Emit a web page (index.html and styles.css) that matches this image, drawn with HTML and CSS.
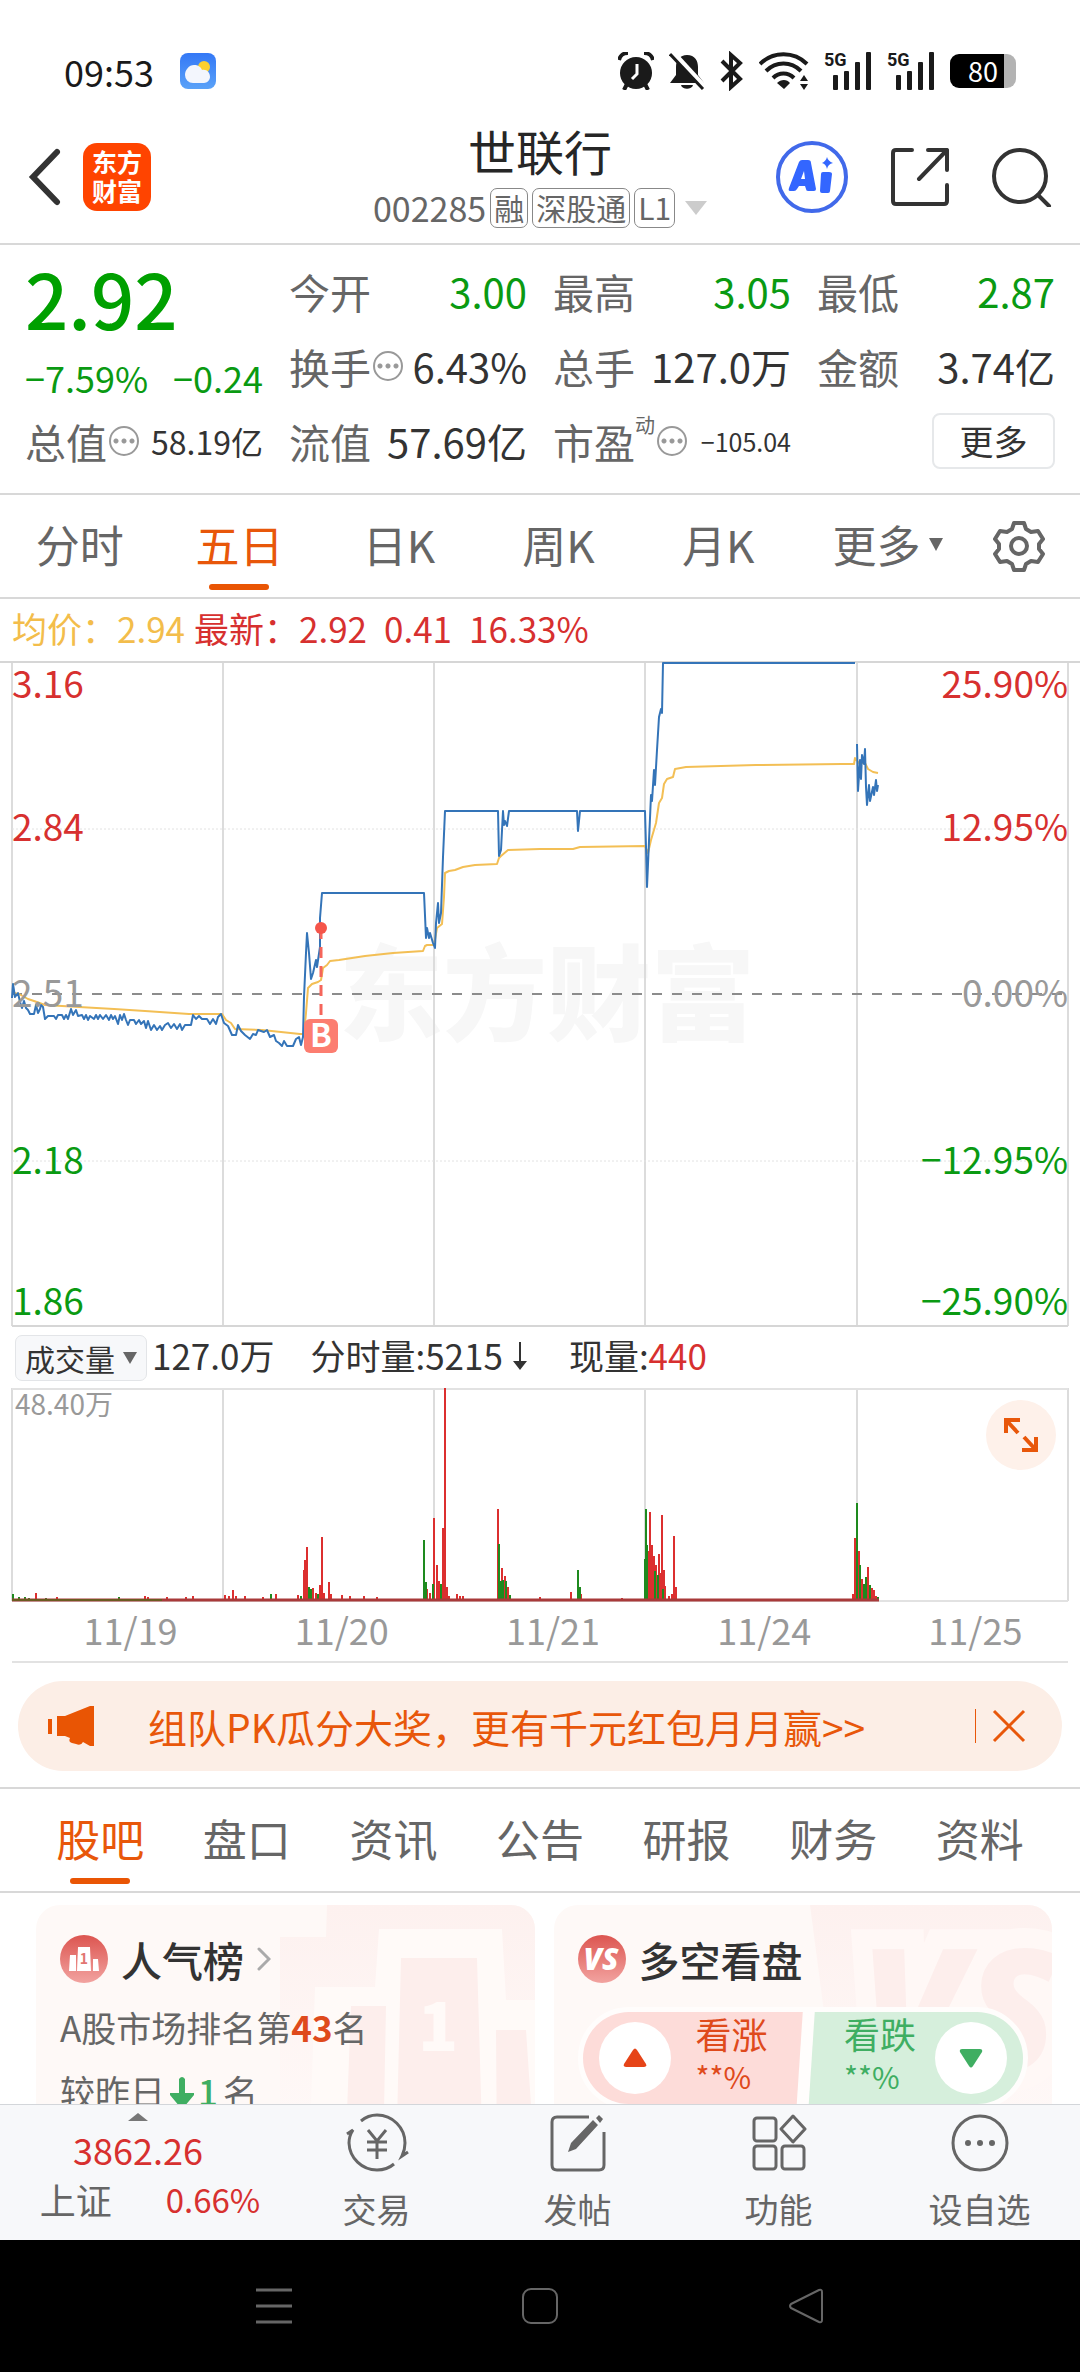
FILE: index.html
```html
<!DOCTYPE html>
<html lang="zh-CN">
<head>
  <meta charset="UTF-8">
  <meta name="viewport" content="width=device-width, initial-scale=1">
  <title>世联行 002285</title>
  <link rel="stylesheet" href="styles.css">
</head>
<body>

  <!-- phone status bar -->
  <div class="status">
    <span class="clock">09:53</span>
    <svg class="weather" width="36" height="36" viewBox="0 0 36 36">
      <defs>
        <linearGradient id="sky" x1="0" y1="0" x2="0" y2="1"><stop offset="0" stop-color="#3478f6"/><stop offset="1" stop-color="#5aa2f8"/></linearGradient>
      </defs>
      <rect width="36" height="36" rx="8" fill="url(#sky)"/>
      <circle cx="24" cy="14" r="6" fill="#fcd02f"/>
      <path d="M13 30a8 8 0 0 1-8-8c0-5 4-10 9-10 4 0 7 2 8 5 5-1 8 3 8 7 0 3-3 6-6 6z" fill="#f3f6fd"/>
    </svg>
    <div class="status-icons">
      <svg width="36" height="38" viewBox="0 0 36 38" fill="#1a1a1a">
        <circle cx="18" cy="21" r="16"/>
        <path d="M1 8a9 9 0 0 1 9-7M35 8a9 9 0 0 0-9-7M9 32l-3 6M27 32l3 6" stroke="#1a1a1a" stroke-width="4" fill="none"/>
        <path d="M19 12v10l-5 5" stroke="#fff" stroke-width="3" fill="none"/>
      </svg>
      <svg width="36" height="38" viewBox="0 0 36 38" fill="#1a1a1a">
        <path d="M18 3c8 0 11 6 11 12v8l6 8H1l6-8v-8C7 8 11 3 18 3z"/>
        <path d="M12 33h12c-1 5-11 5-12 0z"/>
        <path d="M3 0l33 36" stroke="#fff" stroke-width="6"/>
        <path d="M1 2l33 35" stroke="#1a1a1a" stroke-width="3"/>
      </svg>
      <svg width="24" height="40" viewBox="0 0 24 40" fill="none" stroke="#1a1a1a" stroke-width="4">
        <path d="M2 10l18 18-9 8V4l9 8L2 30"/>
      </svg>
      <svg width="50" height="38" viewBox="0 0 50 38" fill="none" stroke="#1a1a1a" stroke-width="4">
        <path d="M1 12c13-13 34-13 47 0M7 19c10-10 25-10 35 0M14 26c6-6 15-6 21 0"/>
        <path d="M18 31c4-4 10-4 13 0l-6 6zM41 29l4-6 4 6zM41 32l4 6 4-6z" fill="#1a1a1a" stroke="none"/>
      </svg>
      <div class="signal">
        <span>5G</span>
        <svg width="40" height="38" viewBox="0 0 40 38" fill="#1a1a1a"><rect x="1" y="23" width="5" height="15" rx="1"/><rect x="12" y="19" width="5" height="19" rx="1"/><rect x="23" y="10" width="5" height="28" rx="1"/><rect x="34" y="0" width="5" height="38" rx="1"/></svg>
      </div>
      <div class="signal">
        <span>5G</span>
        <svg width="40" height="38" viewBox="0 0 40 38" fill="#1a1a1a"><rect x="1" y="23" width="5" height="15" rx="1"/><rect x="12" y="19" width="5" height="19" rx="1"/><rect x="23" y="10" width="5" height="28" rx="1"/><rect x="34" y="0" width="5" height="38" rx="1"/></svg>
      </div>
      <div class="battery">80</div>
    </div>
  </div>

  <!-- stock header -->
  <header class="header">
    <div class="header-side">
      <button class="icon-btn" aria-label="返回">
        <svg width="34" height="58" viewBox="0 0 34 58" fill="none" stroke="#333" stroke-width="6" stroke-linecap="round"><path d="M29 4L5 29l24 25"/></svg>
      </button>
      <a class="logo" href="#">东方<br>财富</a>
    </div>
    <div class="header-title">
      <h1>世联行</h1>
      <div class="sub">
        <span class="code">002285</span>
        <span class="tag">融</span>
        <span class="tag">深股通</span>
        <span class="tag">L1</span>
        <svg class="sub-caret" width="22" height="14" viewBox="0 0 22 14"><path d="M0 0h22L11 14z" fill="#ccc"/></svg>
      </div>
    </div>
    <div class="header-side right">
      <button class="icon-btn" aria-label="AI">
        <svg width="72" height="72" viewBox="0 0 72 72">
          <circle cx="36" cy="36" r="34" fill="none" stroke="#4169ea" stroke-width="4"/>
          <path d="M23 21q1-2 3-2h6q3 0 3 3l5 26q0 2-2 2h-6q-2 0-2-2l-1-3h-6l-2 3q-1 2-3 2h-4q-2 0-1-3zM28 30l-3 8h4zM47 31h6q3 0 3 2l-2 17q0 2-2 2h-6q-2 0-2-2l1-17q0-2 2-2z" fill="#3366ff"/>
          <path d="M51 16q1 4 6 6-5 1-6 6-1-5-5-6 4-2 5-6z" fill="#3366ff"/>
        </svg>
      </button>
      <button class="icon-btn" aria-label="分享">
        <svg width="58" height="58" viewBox="0 0 58 58" fill="none" stroke="#333" stroke-width="4" stroke-linecap="round" stroke-linejoin="round">
          <path d="M21 2H5Q2 2 2 5v48q0 3 3 3h48q3 0 3-3V37M37 2h19v20M56 2L28 31"/>
        </svg>
      </button>
      <button class="icon-btn" aria-label="搜索">
        <svg width="60" height="60" viewBox="0 0 60 60" fill="none" stroke="#333" stroke-width="4" stroke-linecap="round"><circle cx="28" cy="29" r="26"/><path d="M46 48l11 11"/></svg>
      </button>
    </div>
  </header>

  <main>
    <!-- quote -->
    <section class="quote">
      <div class="price down">
        <strong>2.92</strong>
        <div class="change"><span>−7.59%</span><span>−0.24</span></div>
      </div>
      <div class="cell"><span>今开</span><b class="down">3.00</b></div>
      <div class="cell"><span>最高</span><b class="down">3.05</b></div>
      <div class="cell"><span>最低</span><b class="down">2.87</b></div>
      <div class="cell"><span>换手</span><i class="tip"></i><b>6.43%</b></div>
      <div class="cell"><span>总手</span><b>127.0万</b></div>
      <div class="cell"><span>金额</span><b>3.74亿</b></div>
      <div class="cell"><span>总值</span><i class="tip"></i><b class="mid">58.19亿</b></div>
      <div class="cell"><span>流值</span><b>57.69亿</b></div>
      <div class="cell"><span>市盈</span><small>动</small><i class="tip"></i><b class="small">−105.04</b></div>
      <div class="cell"><button class="more-btn">更多</button></div>
    </section>

    <!-- period tabs -->
    <nav class="tabs periods">
      <button>分时</button>
      <button class="active">五日</button>
      <button>日K</button>
      <button>周K</button>
      <button>月K</button>
      <button class="wide">更多<svg width="14" height="13" viewBox="0 0 14 13"><path d="M0 0h14L7 13z" fill="#666"/></svg></button>
      <button class="gear" aria-label="设置">
        <svg width="52" height="52" viewBox="0 0 52 52" fill="none" stroke="#666" stroke-width="4" stroke-linejoin="round">
          <path d="M21 3h10l2 6 5 3 7-1 5 8-4 5v5l4 5-5 8-7-1-5 3-2 6H21l-2-6-5-3-7 1-5-8 4-5v-5l-4-5 5-8 7 1 5-3z"/>
          <circle cx="26" cy="26" r="8"/>
        </svg>
      </button>
    </nav>

    <!-- price chart -->
    <div class="legend">
      <span class="avg">均价：2.94</span>
      <span class="up">最新：2.92</span>
      <span class="up">0.41</span>
      <span class="up">16.33%</span>
    </div>
    <svg class="chart" viewBox="0 0 1080 667">
      <g transform="translate(12 0)">
        <text class="watermark" x="327" y="372">东方财富</text>
        <path class="grid" d="M0 0V665M211 0V665M422 0V665M633 0V665M845 0V665M1056 0V665"/>
        <path class="grid dotted" d="M0 168H1056M0 500H1056"/>
        <path class="edge" d="M-12 1H1068M0 665H1056"/>
        <path class="zero" d="M0 333H1056"/>
        <path class="line avg-line" d="M2 332L7 333 16 338 22 340 33 344 67 346 102 348 133 350 177 353 210 353 214 359 219 362 223 368 250 369 288 373 292 373 294 352 296 327 300 323 306 321 309 319 311 307 315 304 318 300 327 299 353 295 381 292 411 290 413 285 415 284 422 284 425 267 430 263 432 236 433 212 437 210 443 209 451 206 463 204 485 203 487 197 489 195 496 189 528 188 561 188 568 186 633 185 636 192 639 179 644 162 647 142 650 137 652 123 655 118 661 116 663 108 674 106 744 104 830 103 842 103 843 97 847 102 853 102 856 108 861 111 866 112"/>
        <path class="line now-line" d="M0 337L1 323 3 336 6 332 8 341 10 347 12 340 14 347 16 349 18 353 22 353 24 344 26 352 28 348 29 344 31 346 33 358 36 355 42 355 44 358 46 354 50 354 52 358 54 354 56 358 59 348 61 354 64 349 66 355 70 354 72 358 74 354 76 359 78 355 82 358 84 354 86 358 88 354 91 358 94 354 97 359 99 354 101 358 103 355 106 363 108 354 110 359 112 353 114 359 116 364 118 359 122 359 124 363 127 359 129 363 132 360 134 367 136 360 139 369 142 364 145 369 148 365 150 369 153 364 156 362 159 367 162 363 165 368 168 363 170 369 173 364 176 364 179 364 181 354 184 358 187 355 190 358 195 358 198 363 201 358 204 363 206 356 209 353 212 362 216 365 220 374 224 374 226 364 229 370 233 374 238 378 241 373 244 374 246 369 252 371 255 369 258 376 262 374 264 380 267 382 270 385 272 380 275 385 281 385 284 378 287 376 289 384 291 376 292 336 294 292 295 272 297 292 299 318 301 312 304 299 305 306 308 286 308 257 310 232 412 232 414 277 415 267 417 277 418 272 421 282 423 287 424 262 426 242 427 262 429 252 431 196 433 150 486 150 487 195 489 189 491 150 492 164 493 160 495 165 497 150 565 150 566 170 568 150 633 150 634 186 635 226 637 180 639 134 640 140 642 109 643 124 645 89 647 56 649 48 650 52 651 2 843 2M845 83L846 130 848 99 849 118 850 94 852 103 853 88 854 126 855 144 857 124 858 140 861 126 862 134 864 119 865 130 866 124"/>
        <path d="M309 267V358" stroke="#f5655a" stroke-width="3" stroke-dasharray="11 8"/>
        <circle cx="309" cy="267" r="6" fill="#f5554a"/>
        <rect x="292" y="358" width="34" height="34" rx="6" fill="#fc7d70"/>
        <text class="mark" x="309" y="386">B</text>
        <g class="axis">
          <text class="up" x="0" y="37">3.16</text>
          <text class="up" x="0" y="180">2.84</text>
          <text class="flat" x="0" y="346">2.51</text>
          <text class="down" x="0" y="513">2.18</text>
          <text class="down" x="0" y="654">1.86</text>
        </g>
        <g class="axis end">
          <text class="up" x="1056" y="37">25.90%</text>
          <text class="up" x="1056" y="180">12.95%</text>
          <text class="flat" x="1056" y="346">0.00%</text>
          <text class="down" x="1056" y="513">−12.95%</text>
          <text class="down" x="1056" y="654">−25.90%</text>
        </g>
      </g>
    </svg>

    <!-- volume -->
    <div class="vol-head">
      <button class="chip">成交量<svg width="14" height="12" viewBox="0 0 14 12"><path d="M0 0h14L7 12z" fill="#666"/></svg></button>
      <span class="total">127.0万</span>
      <span class="minute">分时量:5215<svg width="14" height="28" viewBox="0 0 14 28" fill="#333"><path d="M6 0h2v19h6L7 28 0 19h6z"/></svg></span>
      <span>现量:<em class="up">440</em></span>
    </div>
    <div class="volume">
      <svg class="chart" viewBox="0 0 1080 215">
        <g transform="translate(12 0)">
          <path class="grid" d="M0 0V213M211 0V213M422 0V213M633 0V213M845 0V213M1056 0V213"/>
          <path class="edge light" d="M0 1H1056M0 213H1056"/>
          <path class="bar red" d="M24 213v-8M45 213v-4M133 213v-5M136 213v-4M155 213v-4M174 213v-4M181 213v-5M213 213v-6M217 213v-5M221 213v-11M224 213v-5M233 213v-5M251 213v-4M264 213v-7M286 213v-6M292 213v-31M293 213v-41M295 213v-54M301 213v-13M304 213v-8M308 213v-16M310 213v-64M312 213v-8M317 213v-19M319 213v-7M330 213v-6M338 213v-5M352 213v-5M365 213v-4M415 213v-12M418 213v-8M422 213v-83M425 213v-36M427 213v-20M431 213v-73M433 213v-213M435 213v-14M437 213v-5M445 213v-7M448 213v-5M451 213v-5M486 213v-92M490 213v-33M493 213v-25M496 213v-14M528 213v-4M559 213v-9M569 213v-7M610 213v-3M637 213v-50M638 213v-89M640 213v-56M642 213v-45M644 213v-36M647 213v-47M648 213v-28M650 213v-86M652 213v-31M653 213v-15M657 213v-5M660 213v-7M662 213v-65M664 213v-14M841 213v-7M843 213v-63M847 213v-50M850 213v-22M856 213v-34M860 213v-13M862 213v-11M864 213v-5"/>
          <path class="bar green" d="M1 213v-7M7 213v-4M13 213v-4M17 213v-3M34 213v-3M107 213v-4M259 213v-7M289 213v-5M297 213v-14M299 213v-12M306 213v-7M412 213v-61M414 213v-19M421 213v-17M429 213v-17M487 213v-57M489 213v-20M491 213v-21M494 213v-20M498 213v-6M566 213v-31M568 213v-14M633 213v-42M634 213v-92M635 213v-56M643 213v-30M646 213v-26M651 213v-12M845 213v-98M848 213v-36M852 213v-17M854 213v-24M858 213v-16M866 213v-4"/>
          <path d="M0 212H867" stroke="#a83a3a" stroke-width="3"/>
          <path d="M0 212H150" stroke="#6b5a20" stroke-width="2"/>
          <text class="cap" x="3" y="27">48.40万</text>
        </g>
      </svg>
      <button class="expand" aria-label="全屏">
        <svg width="34" height="34" viewBox="0 0 34 34" fill="none" stroke="#e8570a" stroke-width="4"><path d="M2 15V2h14M2 2l12 13M32 19v13H18M32 32L20 19"/></svg>
      </button>
    </div>
    <div class="dates">
      <span>11/19</span><span>11/20</span><span>11/21</span><span>11/24</span><span>11/25</span>
    </div>

    <!-- promo -->
    <div class="promo">
      <svg width="46" height="40" viewBox="0 0 46 40" fill="#e95504"><path d="M0 13h4v15H0zM9 10h8L42 0h4v40h-4l-7-4q-2 4-7 2l-4-1q-4-1-2-5l-5-2H9z"/></svg>
      <a href="#">组队PK瓜分大奖，更有千元红包月月赢&gt;&gt;</a>
      <button class="icon-btn close" aria-label="关闭">
        <svg width="34" height="34" viewBox="0 0 34 34" stroke="#e8570a" stroke-width="3"><path d="M2 2l30 30M32 2L2 32"/></svg>
      </button>
    </div>

    <!-- info tabs -->
    <nav class="tabs infos">
      <button class="active">股吧</button>
      <button>盘口</button>
      <button>资讯</button>
      <button>公告</button>
      <button>研报</button>
      <button>财务</button>
      <button>资料</button>
    </nav>

    <div class="cards">
      <section class="card">
        <svg class="art" width="498" height="260" viewBox="0 0 498 260">
          <defs>
            <linearGradient id="pink" x1="0" y1="0" x2="0" y2="1"><stop offset="0" stop-color="#fdf1ef"/><stop offset="1" stop-color="#fffaf9"/></linearGradient>
            <linearGradient id="badge" x1="0" y1="0" x2="0" y2="1"><stop offset="0" stop-color="#dc5550"/><stop offset="1" stop-color="#f2a3a0"/></linearGradient>
          </defs>
          <path d="M290 0H498V260H243V32H289z" fill="url(#pink)"/>
          <path d="M342 24H465L469 95H498V260H272L278 82H338z" fill="#fffaf8"/>
          <path d="M364 53H440L446 260H359zM314 101H349L346 260H308zM459 125H489L498 260H460z" fill="#fdeeec"/>
          <text class="art-one" x="401" y="146">1</text>
        </svg>
        <h2>
          <svg width="48" height="48" viewBox="0 0 48 48">
            <circle cx="24" cy="24" r="24" fill="url(#badge)"/>
            <path d="M10 20h6v16H9zM18 12h12l1 24H17zM33 24h5l1 12h-6z" fill="#fff"/>
            <text class="badge-one" x="24" y="29">1</text>
          </svg>
          人气榜
          <svg width="14" height="24" viewBox="0 0 14 24" fill="none" stroke="#aaa" stroke-width="3" stroke-linecap="round"><path d="M2 2l10 10L2 22"/></svg>
        </h2>
        <p>A股市场排名第<strong class="hot">43</strong>名</p>
        <p class="rank">较昨日<svg width="24" height="32" viewBox="0 0 24 32" fill="#3fae62"><path d="M9 2q3-4 6 0v14h9v2L14 30q-2 2-4 0L0 18v-2h9z"/></svg><strong class="cool">1</strong>名</p>
      </section>

      <section class="card">
        <svg class="art" width="498" height="260" viewBox="0 0 498 260">
          <path d="M256 0H498V260H290z" fill="url(#pink)"/>
          <text class="art-vs" x="306" y="166">VS</text>
        </svg>
        <h2>
          <svg width="48" height="48" viewBox="0 0 48 48">
            <circle cx="24" cy="24" r="24" fill="url(#badge)"/>
            <text class="badge-vs" x="23" y="35">VS</text>
          </svg>
          多空看盘
        </h2>
        <div class="vote">
          <button class="bull">
            <i><svg width="24" height="20" viewBox="0 0 24 20"><path d="M10 2q2-3 4 0l9 14q1 3-2 3H3q-3 0-2-3z" fill="#e64418"/></svg></i>
            <span>看涨<small>**%</small></span>
          </button>
          <button class="bear">
            <span>看跌<small>**%</small></span>
            <i><svg width="24" height="20" viewBox="0 0 24 20"><path d="M10 18q2 3 4 0l9-14q1-3-2-3H3q-3 0-2 3z" fill="#3fae62"/></svg></i>
          </button>
        </div>
      </section>
    </div>
  </main>

  <!-- bottom toolbar -->
  <footer class="toolbar">
    <a class="index" href="#">
      <svg width="20" height="8" viewBox="0 0 20 8"><path d="M10 0l10 8H0z" fill="#777"/></svg>
      <span class="up">3862.26</span>
      <span class="row">上证<em class="up">0.66%</em></span>
    </a>
    <a href="#">
      <svg width="66" height="60" viewBox="0 0 66 60" fill="none" stroke="#666" stroke-width="3">
        <path d="M17 8Q24 2 33 2a28 28 0 0 1 28 28q0 7-3 13l6-4M50 51q-7 6-17 6A28 28 0 0 1 5 30q0-7 4-13l-6 4"/>
        <path d="M24 17l9 11 9-11M23 29h20M23 37h20M33 28v18"/>
      </svg>
      交易
    </a>
    <a href="#">
      <svg width="58" height="60" viewBox="0 0 58 60" fill="none" stroke="#666" stroke-width="3">
        <path d="M40 4H8Q3 4 3 9v43q0 5 5 5h42q5 0 5-5V19"/>
        <path d="M19 39l3-9L44 7l5 5-22 24zM47 5l3-3 4 4-3 4z" fill="#666" stroke="none"/>
      </svg>
      发帖
    </a>
    <a href="#">
      <svg width="56" height="60" viewBox="0 0 56 60" fill="none" stroke="#666" stroke-width="3">
        <rect x="3" y="5" width="22" height="23" rx="3"/><rect x="3" y="33" width="22" height="23" rx="3"/><rect x="31" y="33" width="22" height="23" rx="3"/>
        <path d="M42 3l12 13-12 13-12-13z" stroke-linejoin="round"/>
      </svg>
      功能
    </a>
    <a href="#">
      <svg width="58" height="60" viewBox="0 0 58 60" fill="#666">
        <circle cx="29" cy="30" r="27" fill="none" stroke="#666" stroke-width="3"/>
        <circle cx="17" cy="30" r="3"/><circle cx="29" cy="30" r="3"/><circle cx="41" cy="30" r="3"/>
      </svg>
      设自选
    </a>
  </footer>

  <!-- system navigation -->
  <div class="sysnav">
    <button aria-label="菜单"><svg width="36" height="36" viewBox="0 0 36 36" stroke="#666" stroke-width="3"><path d="M0 2h36M0 18h36M0 34h36"/></svg></button>
    <button aria-label="主页"><svg width="36" height="36" viewBox="0 0 36 36" fill="none" stroke="#666" stroke-width="2"><rect x="1" y="1" width="34" height="34" rx="8"/></svg></button>
    <button aria-label="后退"><svg width="36" height="36" viewBox="0 0 36 36" fill="none" stroke="#666" stroke-width="2" stroke-linejoin="round"><path d="M34 4v28q0 3-3 2L3 20q-2-2 0-4L31 2q3-1 3 2z"/></svg></button>
  </div>

</body>
</html>
```
FILE: styles.css
```css
* {
  box-sizing: border-box;
}

body {
  margin: 0;
  height: 100vh;
  display: flex;
  flex-direction: column;
  background: #fff;
  color: #333;
  font-family: "Noto Sans CJK SC", sans-serif;
  font-size: 36px;
}

button {
  margin: 0;
  padding: 0;
  border: none;
  background: none;
  color: inherit;
  font: inherit;
  cursor: pointer;
}

a {
  color: inherit;
  text-decoration: none;
}

svg {
  flex: none;
}

em, i {
  font-style: normal;
}

h1, h2, p {
  margin: 0;
}

.up { color: #d7302f; fill: #d7302f; }
.down { color: #0a9a12; fill: #0a9a12; }
.flat { fill: #999; }

/* status bar */
.status {
  display: flex;
  align-items: center;
  flex: none;
  height: 108px;
  padding: 34px 64px 0;
  color: #1a1a1a;
}

.clock {
  line-height: 70px;
}

.weather {
  margin-left: 26px;
}

.status-icons {
  display: flex;
  align-items: center;
  gap: 15px;
  margin-left: auto;
}

.signal {
  position: relative;
  display: flex;
  justify-content: flex-end;
  width: 48px;
}

.signal span {
  position: absolute;
  left: 0;
  top: 0;
  font-family: Roboto, sans-serif;
  font-size: 18px;
  font-weight: bold;
  line-height: 16px;
}

.battery {
  width: 66px;
  height: 34px;
  border-radius: 9px;
  background: linear-gradient(90deg, #000 54px, #b3b3b3 54px);
  color: #fff;
  font-size: 27px;
  line-height: 34px;
  text-align: center;
}

/* header */
.header {
  display: flex;
  align-items: center;
  flex: none;
  height: 137px;
  padding: 2px 28px 0;
  border-bottom: 2px solid #d8d8d8;
}

.header-side {
  display: flex;
  align-items: center;
  flex: 1;
  gap: 21px;
}

.header-side.right {
  justify-content: flex-end;
  gap: 43px;
}

.icon-btn {
  display: flex;
}

.logo {
  width: 68px;
  height: 68px;
  padding-top: 4px;
  border-radius: 14px;
  background: #ff4400;
  color: #fff;
  font-size: 25px;
  font-weight: bold;
  line-height: 29px;
  text-align: center;
}

.header-title {
  display: flex;
  flex-direction: column;
  align-items: center;
}

h1 {
  font-size: 48px;
  font-weight: normal;
  line-height: 62px;
  color: #262626;
}

.sub {
  display: flex;
  align-items: center;
  gap: 4px;
  height: 54px;
  color: #666;
}

.code {
  font-size: 34px;
  line-height: 50px;
}

.tag {
  height: 40px;
  padding: 0 3px;
  border: 1px solid #888;
  border-radius: 7px;
  font-size: 30px;
  line-height: 36px;
}

.sub-caret {
  margin-left: 6px;
}

main {
  flex: 1;
  min-height: 0;
  overflow: hidden;
}

/* quote */
.quote {
  display: grid;
  grid-template-columns: repeat(4, 1fr);
  grid-template-rows: repeat(3, 75px);
  column-gap: 26px;
  height: 250px;
  padding: 8px 25px 0;
  border-bottom: 2px solid #d8d8d8;
}

.price {
  grid-row: span 2;
}

.price strong {
  display: block;
  font-size: 76px;
  font-weight: 500;
  line-height: 88px;
  color: #00a000;
}

.change {
  display: flex;
  justify-content: space-between;
  margin-top: 6px;
  line-height: 60px;
}

.cell {
  display: flex;
  align-items: center;
  font-size: 41px;
  line-height: 60px;
  color: #666;
  white-space: nowrap;
}

.cell b {
  margin-left: auto;
  font-size: 40px;
  font-weight: normal;
}

.cell b:not(.down) {
  color: #333;
}

.cell .mid {
  font-size: 32px;
}

.cell .small {
  font-size: 25px;
}

.cell small {
  align-self: flex-start;
  font-size: 20px;
  line-height: 44px;
}

.tip {
  width: 30px;
  height: 30px;
  margin-left: 2px;
  border: 2px solid #999;
  border-radius: 50%;
  background: radial-gradient(circle, #999 2px, transparent 3px) center / 8px 8px no-repeat,
    radial-gradient(circle, #999 2px, transparent 3px) 1px center / 8px 8px no-repeat,
    radial-gradient(circle, #999 2px, transparent 3px) 17px center / 8px 8px no-repeat;
}

.more-btn {
  width: 123px;
  height: 56px;
  margin-left: auto;
  border: 2px solid #e6e8ea;
  border-radius: 8px;
  color: #333;
  font-size: 34px;
  line-height: 52px;
}

/* tabs */
.tabs {
  display: flex;
  height: 104px;
  border-bottom: 2px solid #d8d8d8;
  font-size: 44px;
  color: #666;
}

.tabs button {
  position: relative;
  display: flex;
  flex: 1;
  align-items: center;
  justify-content: center;
  padding-bottom: 4px;
  line-height: 94px;
}

.tabs .active {
  color: #e8570a;
}

.tabs .active::after {
  content: "";
  position: absolute;
  left: 50%;
  bottom: 7px;
  width: 60px;
  height: 6px;
  margin-left: -30px;
  border-radius: 3px;
  background: #e95504;
}

.periods .wide {
  gap: 9px;
  flex: none;
  width: 180px;
}

.periods .gear {
  flex: none;
  width: 102px;
  padding: 0 20px 0 0;
}

.infos {
  height: 106px;
  padding: 0 27px;
  border-top: 2px solid #d8d8d8;
}

/* charts */
.legend {
  display: flex;
  gap: 17px;
  height: 62px;
  padding-left: 12px;
  font-size: 35px;
  line-height: 58px;
}

.legend .avg {
  margin-right: -8px;
  color: #f3bd4b;
}

.chart {
  display: block;
  width: 100%;
  height: auto;
  overflow: visible;
}

.grid {
  stroke: #dcdcdc;
  stroke-width: 2;
}

.dotted {
  stroke: #e2e2e2;
  stroke-dasharray: 2 2;
  stroke-width: 1;
}

.edge {
  stroke: #d6d6d6;
  stroke-width: 2;
}

.light {
  stroke: #e2e2e2;
}

.zero {
  stroke: #8c8c8c;
  stroke-width: 2;
  stroke-dasharray: 10 10;
}

.line {
  fill: none;
  stroke-width: 2;
  stroke-linejoin: round;
}

.avg-line { stroke: #f3bf55; }
.now-line { stroke: #3474b8; }

.watermark {
  fill: #f7f7f7;
  font-size: 104px;
  font-weight: 900;
}

.axis {
  font-size: 37px;
}

.end {
  text-anchor: end;
}

.mark {
  fill: #fff;
  font-size: 32px;
  font-weight: bold;
  text-anchor: middle;
}

.vol-head {
  display: flex;
  align-items: center;
  height: 60px;
  padding-left: 15px;
  font-size: 35px;
}

.vol-head span {
  height: 60px;
  line-height: 54px;
}

.chip {
  display: flex;
  align-items: center;
  gap: 8px;
  width: 132px;
  height: 46px;
  padding-left: 9px;
  border: 1px solid #e3e5e8;
  border-radius: 7px;
  background: #f7f8fa;
  font-size: 30px;
  line-height: 42px;
}

.total {
  margin-left: 5px;
}

.minute {
  margin: 0 42px 0 36px;
}

.minute svg {
  margin-left: 10px;
}

.volume {
  position: relative;
}

.bar { stroke-width: 2; }
.red { stroke: #dc2f2f; }
.green { stroke: #1e8a1e; }

.cap {
  fill: #999;
  font-size: 28px;
}

.expand {
  position: absolute;
  top: 12px;
  right: 24px;
  display: flex;
  align-items: center;
  justify-content: center;
  width: 70px;
  height: 70px;
  border-radius: 50%;
  background: #fef1ea;
}

.dates {
  display: grid;
  grid-template-columns: repeat(5, 1fr);
  height: 60px;
  margin: 0 12px;
  border-bottom: 2px solid #e2e2e2;
  color: #999;
  line-height: 52px;
  text-align: center;
}

.dates span {
  padding-left: 26px;
}

/* promo */
.promo {
  display: flex;
  align-items: center;
  height: 90px;
  margin: 18px 18px 16px;
  padding: 0 36px 0 30px;
  border-radius: 45px;
  background: #fceee6;
  color: #e8570a;
}

.promo a {
  flex: 1;
  margin-left: 54px;
  font-size: 39px;
  line-height: 86px;
  white-space: nowrap;
}

.close {
  padding-left: 16px;
  border-left: 1px solid #e8570a;
}

/* cards */
.cards {
  display: grid;
  grid-template-columns: 1fr 1fr;
  gap: 19px;
  padding: 12px 28px 0 36px;
}

.card {
  position: relative;
  height: 260px;
  padding: 27px 24px 0;
  border-radius: 24px;
  background: #fef9f7;
  overflow: hidden;
}

.art {
  position: absolute;
  top: 0;
  right: 0;
}

.art-one {
  fill: #fffaf8;
  font-size: 66px;
  font-weight: 900;
  text-anchor: middle;
}

.art-vs {
  fill: #fdeeec;
  stroke: #fff8f6;
  stroke-width: 40px;
  paint-order: stroke;
  font-family: "Open Sans", sans-serif;
  font-size: 170px;
  font-weight: 800;
  font-style: italic;
}

.card h2 {
  position: relative;
  display: flex;
  align-items: center;
  gap: 13px;
  font-size: 41px;
  font-weight: 500;
  line-height: 54px;
}

.badge-one,
.badge-vs {
  fill: #e27672;
  font-size: 14px;
  font-weight: bold;
  text-anchor: middle;
}

.badge-vs {
  fill: #fff;
  font-family: "Open Sans", sans-serif;
  font-size: 30px;
  font-weight: 800;
  font-style: italic;
}

.card p {
  position: relative;
  margin-top: 9px;
  color: #666;
  font-size: 35px;
  line-height: 64px;
}

.card p + p {
  margin-top: 0;
}

.hot {
  color: #df4a1c;
}

.cool {
  color: #3fae62;
}

.card .rank svg {
  margin: 0 4px 0 5px;
  vertical-align: -3px;
}

.rank strong {
  margin-right: 5px;
  font-weight: 500;
}

.vote {
  position: relative;
  display: flex;
  height: 102px;
  margin-top: 21px;
  border: 5px solid #fffdfc;
  border-radius: 51px;
  background: #fffdfc;
  overflow: hidden;
}

.vote button {
  display: flex;
  flex: 1;
  align-items: center;
  text-align: left;
}

.vote i {
  display: flex;
  align-items: center;
  justify-content: center;
  width: 72px;
  height: 72px;
  border-radius: 50%;
  background: #fff;
}

.vote span {
  padding-bottom: 6px;
  line-height: 42px;
}

.vote small {
  display: block;
  font-size: 30px;
  line-height: 44px;
}

.bull {
  gap: 25px;
  padding-left: 16px;
  background: #fddcd9;
  color: #df4a1c;
  clip-path: polygon(0 0, 100% 0, calc(100% - 6px) 100%, 0 100%);
}

.bear {
  justify-content: flex-end;
  gap: 19px;
  padding-right: 16px;
  background: #d6efdc;
  color: #3fae62;
  clip-path: polygon(12px 0, 100% 0, 100% 100%, 6px 100%);
}

/* bottom toolbar */
.toolbar {
  display: flex;
  flex: none;
  height: 136px;
  border-top: 1px solid #d3d6da;
  background: #f7f8fa;
  color: #666;
  font-size: 34px;
}

.toolbar a {
  display: flex;
  flex: 201;
  flex-direction: column;
  align-items: center;
  padding-top: 8px;
  line-height: 72px;
}

.toolbar .index {
  flex: 276;
  font-size: 36px;
  line-height: 50px;
}

.index svg {
  margin-bottom: 3px;
}

.index .row {
  display: flex;
  align-items: center;
  gap: 54px;
  padding-left: 24px;
}

.row em {
  font-size: 33px;
}

.sysnav {
  display: flex;
  align-items: center;
  justify-content: center;
  gap: 230px;
  flex: none;
  height: 132px;
  background: #000;
}

.sysnav button {
  display: flex;
}
```
